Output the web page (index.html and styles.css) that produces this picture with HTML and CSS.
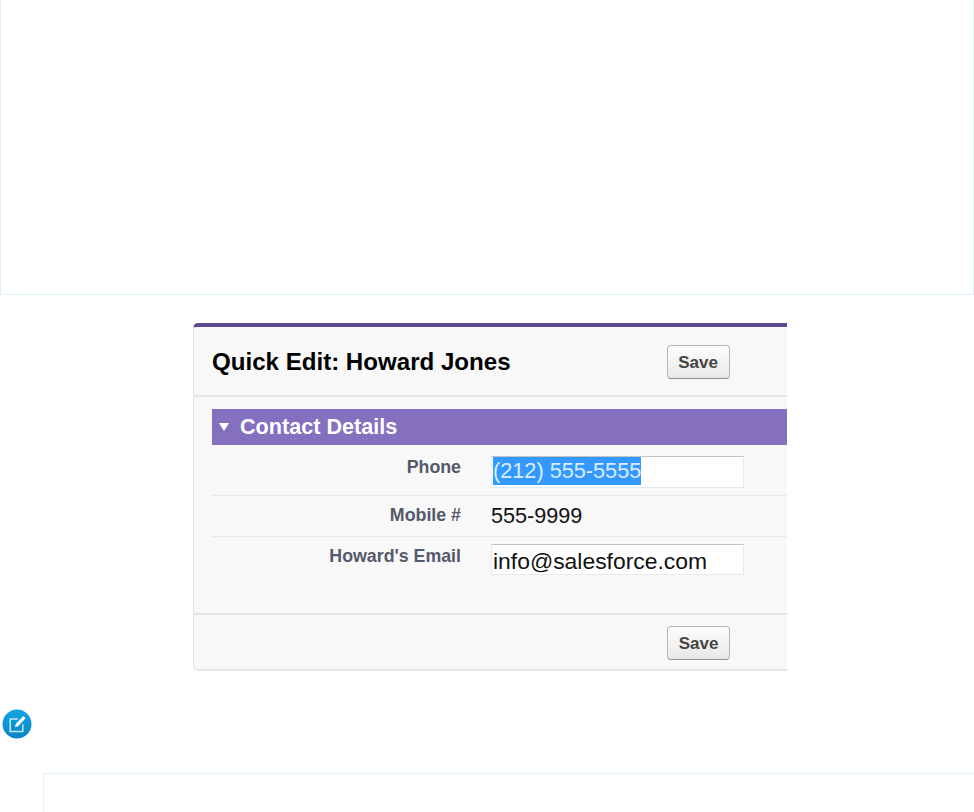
FILE: index.html

```html
<!DOCTYPE html>
<html lang="en">

<head>
    <meta charset="UTF-8">
    <meta name="viewport" content="width=device-width, initial-scale=1.0">
    <title>Quick Edit</title>
    <link rel="stylesheet" href="styles.css">
</head>

<body>
    <div class="topbox"></div>

    <div class="shot">
        <div class="shot_head">
            <h2 class="shot_title">Quick Edit: Howard Jones</h2>
            <span class="savebtn">Save</span>
        </div>
        <div class="section">
            <div class="section_bar">
                <span class="arrow"></span>
                <span>Contact Details</span>
            </div>
            <div class="row row1">
                <div class="label">Phone</div>
                <div class="field"><span class="selected">(212) 555-5555</span></div>
            </div>
            <div class="row row2">
                <div class="label">Mobile #</div>
                <div class="value">555-9999</div>
            </div>
            <div class="row row3">
                <div class="label">Howard's Email</div>
                <div class="field field_email">info@salesforce.com</div>
            </div>
        </div>
        <div class="shot_foot">
            <span class="savebtn">Save</span>
        </div>
    </div>

    <div class="note">
        <svg class="noteicon" width="30" height="30" viewBox="0 0 30 30">
            <defs>
                <linearGradient id="notefill" x1="0" y1="0" x2="0" y2="1">
                    <stop offset="0" stop-color="#12a5e0" />
                    <stop offset="1" stop-color="#0a84c6" />
                </linearGradient>
            </defs>
            <circle cx="15" cy="15" r="14.5" fill="url(#notefill)" />
            <path d="M16 10H8.2v12.6h12.6v-7.4" fill="none" stroke="#c4e9f9" stroke-width="1.5" />
            <path d="M13 18.2l.7-3.2 7.6-8 2.3 2.2-7.6 8z" fill="#fff" />
        </svg>
    </div>

    <div class="bottombox"></div>
</body>

</html>
```

FILE: styles.css

```css
* {
    box-sizing: border-box;
}

html,
body {
    height: 812px;
    overflow: hidden;
}

body {
    margin: 0;
    background-color: #fff;
    font-family: "Liberation Sans", Arial, sans-serif;
}

.topbox {
    height: 295px;
    border: 1px solid #dff1f8;
    border-top: none;
}

/* screenshot of the quick edit panel, cut off on the right */
.shot {
    width: 594px;
    height: 348px;
    margin: 28px 0 0 193px;
    background-color: #f8f8f8;
    border-top: 4px solid #5b4a8f;
    border-left: 1px solid #e2e2e2;
    border-bottom: 2px solid #e8e8e8;
    border-radius: 5px 0 0 5px;
    display: flex;
    flex-direction: column;
}

.shot_head {
    height: 70px;
    padding: 2px 57px 0 18px;
    border-bottom: 2px solid #e4e4e4;
    display: flex;
    align-items: center;
    gap: 156px;
}

.shot_title {
    margin: 0;
    font-size: 24.1px;
    font-weight: bold;
    color: #000;
    white-space: nowrap;
}

.savebtn {
    width: 63px;
    height: 34px;
    padding-top: 2px;
    border: 1px solid #b5b5b5;
    border-bottom-color: #8f8f8f;
    border-radius: 4px;
    background: linear-gradient(#fdfdfd, #e8e8e8);
    color: #444;
    font-size: 17px;
    font-weight: bold;
    display: flex;
    align-items: center;
    justify-content: center;
}

.section {
    flex: 1;
    padding: 12px 0 0 18px;
}

.section_bar {
    height: 36px;
    padding-left: 7px;
    background-color: #8570bf;
    color: #fff;
    font-size: 21.6px;
    font-weight: bold;
    display: flex;
    align-items: center;
    gap: 11px;
}

.arrow {
    width: 0;
    height: 0;
    border-left: 5.5px solid transparent;
    border-right: 5.5px solid transparent;
    border-top: 8px solid #fff;
}

.row {
    display: flex;
    align-items: flex-start;
    gap: 30px;
}

.row1 {
    height: 51px;
    padding-top: 11px;
    border-bottom: 1px solid #e8e8e8;
}

.row2 {
    height: 41px;
    border-bottom: 1px solid #e8e8e8;
    padding-top: 8px;
}

.row3 {
    padding-top: 7px;
}

.label {
    width: 249px;
    text-align: right;
    font-size: 17.8px;
    font-weight: bold;
    color: #555a6b;
    line-height: 22px;
}

.row3 .label {
    padding-top: 1px;
}

.field {
    width: 253px;
    height: 32px;
    padding: 0 1px;
    background-color: #fff;
    border: 1px solid #e6e9ed;
    border-top-color: #c4c4c4;
    font-size: 21.7px;
    line-height: 30px;
    color: #111;
}

.field_email {
    height: 31px;
    font-size: 22.9px;
    line-height: 32px;
}

.selected {
    display: block;
    width: fit-content;
    height: 28px;
    line-height: 28px;
    background-color: #3399ff;
    color: #dcecff;
}

.value {
    font-size: 21.6px;
    line-height: 24px;
    color: #111;
}

.shot_foot {
    height: 56px;
    padding: 11px 57px 0 0;
    border-top: 2px solid #e4e4e4;
    display: flex;
    justify-content: flex-end;
}

.note {
    height: 64px;
    margin-top: 38px;
    padding-left: 2px;
}

.noteicon {
    display: block;
}

.bottombox {
    height: 40px;
    margin-left: 43px;
    border: 1px solid #dff1f8;
    border-right: none;
    background-color: #fff;
}
```
